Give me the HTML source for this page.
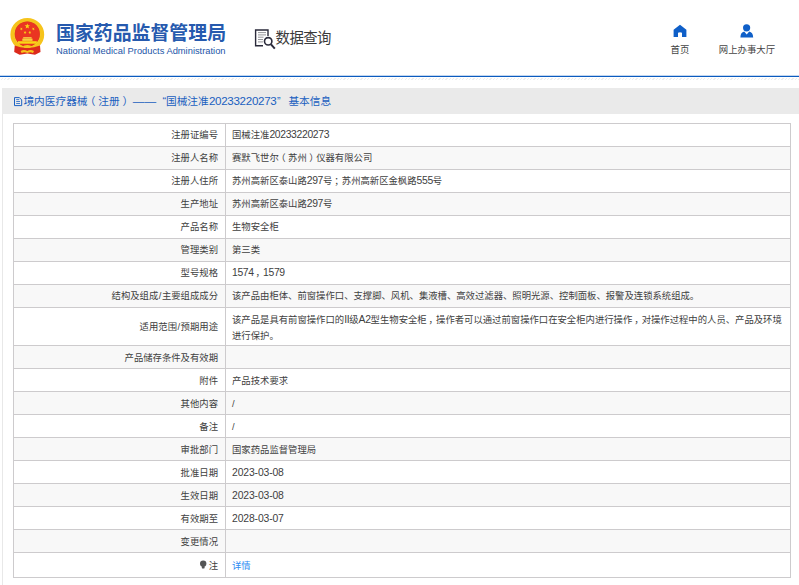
<!DOCTYPE html>
<html lang="zh-CN">
<head>
<meta charset="utf-8">
<title>国家药品监督管理局 数据查询</title>
<style>
html,body{margin:0;padding:0;background:#fff;}
body{width:799px;height:585px;overflow:hidden;position:relative;font-family:"Liberation Sans","Noto Sans CJK SC",sans-serif;color:#333;}
.abs{position:absolute;white-space:nowrap;}
#title{left:56px;top:21px;font-size:18.9px;font-weight:bold;color:#265aae;line-height:26px;letter-spacing:0;}
#subtitle{left:56px;top:45px;font-size:9.33px;color:#2356a8;line-height:12px;}
#qtext{left:275.6px;top:28px;font-size:14.4px;letter-spacing:-0.6px;color:#3a3a3a;line-height:20px;}
#hometext{left:660px;width:40px;text-align:center;top:44px;font-size:9.4px;color:#444;line-height:12px;}
#usertext{left:707px;width:80px;text-align:center;top:44px;font-size:9.4px;color:#444;line-height:12px;}
#blueline{left:0;top:75px;width:799px;height:2px;background:linear-gradient(#c2d6ef 0,#c2d6ef 1px,#0b5bbf 1px,#0b5bbf 2px);}
#hatch{left:0;top:78px;width:799px;height:2px;background:repeating-linear-gradient(135deg,#fff 0,#fff 1.5px,#eeeeee 1.5px,#eeeeee 2.4px);}
#panel{left:2px;top:88px;width:810px;height:500px;border-left:1px solid #e8e8e8;box-sizing:border-box;}
#phead{left:2px;top:88px;width:810px;height:26px;background:#eaeaea;}
#ptext{left:23.4px;top:93px;font-size:10.7px;color:#1a5fc0;line-height:16px;width:320px;height:16px;}
table{position:absolute;left:13px;top:123px;width:778px;border-collapse:collapse;table-layout:fixed;font-size:9.35px;color:#404040;}
td{border:1px solid #cdcbcd;height:23px;padding:0 6px;line-height:14px;box-sizing:border-box;vertical-align:middle;}
table{border:1px solid #c9c7c9;}
td.l{width:212px;text-align:right;padding-right:7px;}
td.v{text-align:left;padding-left:6px;}
tr:nth-child(even) td{background:#f8f8f8;}
tr.tall td{height:38px;line-height:16px;padding-top:2px;}
a{color:#2d8af2;text-decoration:none;}
tr.last td{height:25px;}
tr:nth-child(n+9) td{padding-top:2px;}
tr.tall td.l{padding-top:0;}
.pl{position:relative;left:-0.27em;}
.pr{position:relative;left:0.27em;}
.sl{margin:0 .5px;}
.pc{position:relative;left:0.2em;}
.n{font-size:10.4px;letter-spacing:-0.35px;}
.d{letter-spacing:-0.14px;}
</style>
</head>
<body>
<svg id="icons" class="abs" style="left:0;top:0;z-index:5" width="799" height="585" viewBox="0 0 799 585">
<!-- national emblem -->
<g>
<ellipse cx="27.3" cy="34.5" rx="14.9" ry="14.5" fill="none" stroke="#f6c41c" stroke-width="4"/>
<path d="M14.7 45.4 Q20 47.8 27.3 48 Q34.6 47.8 40 45.4 L40.5 52 L35 54.8 L27.3 53.6 L19.6 54.8 L14.2 52 Z" fill="#dc2a1c"/>
<circle cx="27.3" cy="34" r="13.4" fill="#f6c41c"/>
<circle cx="27.3" cy="34" r="12.6" fill="#d93a1e"/>
<circle cx="27.3" cy="34" r="12.2" fill="#ea3522"/>
<polygon points="27.30,23.40 27.99,25.25 29.96,25.33 28.42,26.56 28.95,28.47 27.30,27.38 25.65,28.47 26.18,26.56 24.64,25.33 26.61,25.25" fill="#f9d616"/>
<polygon points="22.20,27.41 22.01,28.53 22.97,29.13 21.85,29.30 21.57,30.39 21.06,29.38 19.94,29.45 20.74,28.66 20.33,27.61 21.33,28.13" fill="#f9d616"/>
<polygon points="32.50,27.41 33.37,28.13 34.37,27.61 33.96,28.66 34.76,29.45 33.64,29.38 33.13,30.39 32.85,29.30 31.73,29.13 32.69,28.53" fill="#f9d616"/>
<polygon points="25.41,30.95 25.52,32.08 26.60,32.42 25.56,32.87 25.57,33.99 24.83,33.15 23.76,33.51 24.33,32.54 23.66,31.63 24.76,31.87" fill="#f9d616"/>
<polygon points="29.39,30.95 30.04,31.87 31.14,31.63 30.47,32.54 31.04,33.51 29.97,33.15 29.23,33.99 29.24,32.87 28.20,32.42 29.28,32.08" fill="#f9d616"/>
<rect x="23.2" y="37.2" width="8.4" height="1.3" fill="#f9d84a"/>
<rect x="22.3" y="38.6" width="10.2" height="2.3" fill="#f7cf3a"/>
<rect x="18" y="41.2" width="18.8" height="2.5" fill="#f9d616"/>
<ellipse cx="27.3" cy="46.6" rx="3.7" ry="1.5" fill="#f6c41c"/>
<path d="M20.6 51 Q24 49.2 27.3 51 Q30.6 49.2 34 51 L33 53 Q30 51.6 27.3 53 Q24.6 51.6 21.6 53 Z" fill="#f6c41c"/>
</g>
<!-- query icon -->
<g fill="none" stroke="#2b2b3b" stroke-width="1.4">
<path d="M268 36 L268 30 L255.6 30 L255.6 45.8 L263 45.8"/>
<circle cx="268.2" cy="41.3" r="3.7" stroke-width="1.6"/>
<path d="M271 44.3 L274.8 48.6" stroke-width="2"/>
</g>
<g stroke="#8a8a90" stroke-width="0.9">
<path d="M258 32.6 H266"/><path d="M258 34.9 H266"/><path d="M258 37.2 H263.5"/><path d="M258 39.5 H263"/><path d="M258 41.9 H263"/>
</g>
<!-- home icon -->
<path d="M680 24.7 L686.4 29.8 L686.4 37 L682 37 L682 32.8 Q680 31.6 678 32.8 L678 37 L673.6 37 L673.6 29.8 Z" fill="#0f5fc8"/>
<!-- user icon -->
<circle cx="746.6" cy="27.8" r="3.6" fill="#0f5fc8"/>
<path d="M740.4 37.4 Q740.6 32.4 744.2 31.6 L746.7 34.6 L749.2 31.6 Q752.9 32.4 753.2 37.4 Z" fill="#0f5fc8"/>
<!-- panel doc icon -->
<g fill="none" stroke="#1c62c4" stroke-width="1">
<path d="M14.5 97.6 H19.4 L21.7 99.9 V105.6 H14.5 Z"/>
<path d="M16.2 99.6 H19.2" stroke-width="0.8"/><path d="M16.2 101.5 H20" stroke-width="0.8"/><path d="M16.2 103.5 H20" stroke-width="0.8"/>
</g>
<!-- bulb icon -->
<g fill="#555">
<circle cx="203.2" cy="563.6" r="3.2"/>
<rect x="201.8" y="566" width="2.8" height="2.4" rx="0.6"/>
</g>
</svg>
<div id="title" class="abs">国家药品监督管理局</div>
<div id="subtitle" class="abs">National Medical Products Administration</div>
<div id="qtext" class="abs">数据查询</div>
<div id="hometext" class="abs">首页</div>
<div id="usertext" class="abs">网上办事大厅</div>
<div id="blueline" class="abs"></div>
<div id="hatch" class="abs"></div>
<div id="panel" class="abs"></div>
<div id="phead" class="abs"></div>
<div id="ptext" class="abs"><span class="abs" style="left:0">境内医疗器械<span class="pl">（</span>注册<span class="pr">）</span></span><span class="abs" style="left:109.4px;font-size:11.7px">——</span><span class="abs" style="left:139px">“</span><span class="abs" style="left:142.6px">国械注准</span><span class="abs" style="left:185.6px;font-size:11.6px;letter-spacing:-0.32px">20233220273</span><span class="abs" style="left:253.6px">”</span><span class="abs" style="left:265px">基本信息</span></div>
<table>
<tr><td class="l">注册证编号</td><td class="v">国械注准<span class="n">20233220273</span></td></tr>
<tr><td class="l">注册人名称</td><td class="v">赛默飞世尔<span class="pl">（</span>苏州<span class="pr">）</span>仪器有限公司</td></tr>
<tr><td class="l">注册人住所</td><td class="v">苏州高新区泰山路<span class="n">297</span>号<span class="pc">；</span>苏州高新区金枫路<span class="n">555</span>号</td></tr>
<tr><td class="l">生产地址</td><td class="v">苏州高新区泰山路<span class="n">297</span>号</td></tr>
<tr><td class="l">产品名称</td><td class="v">生物安全柜</td></tr>
<tr><td class="l">管理类别</td><td class="v">第三类</td></tr>
<tr><td class="l">型号规格</td><td class="v"><span class="n">1574</span><span class="pc">，</span><span class="n">1579</span></td></tr>
<tr><td class="l">结构及组成<span class="sl">/</span>主要组成成分</td><td class="v">该产品由柜体、前窗操作口、支撑脚、风机、集液槽、高效过滤器、照明光源、控制面板、报警及连锁系统组成。</td></tr>
<tr class="tall"><td class="l">适用范围<span class="sl">/</span>预期用途</td><td class="v">该产品是具有前窗操作口的<span class="n">II</span>级<span class="n">A2</span>型生物安全柜<span class="pc">，</span>操作者可以通过前窗操作口在安全柜内进行操作<span class="pc">，</span>对操作过程中的人员、产品及环境进行保护。</td></tr>
<tr><td class="l">产品储存条件及有效期</td><td class="v"></td></tr>
<tr><td class="l">附件</td><td class="v">产品技术要求</td></tr>
<tr><td class="l">其他内容</td><td class="v">/</td></tr>
<tr><td class="l">备注</td><td class="v">/</td></tr>
<tr><td class="l">审批部门</td><td class="v">国家药品监督管理局</td></tr>
<tr><td class="l">批准日期</td><td class="v"><span class="n d">2023-03-08</span></td></tr>
<tr><td class="l">生效日期</td><td class="v"><span class="n d">2023-03-08</span></td></tr>
<tr><td class="l">有效期至</td><td class="v"><span class="n d">2028-03-07</span></td></tr>
<tr><td class="l">变更情况</td><td class="v"></td></tr>
<tr class="last"><td class="l">注</td><td class="v"><a>详情</a></td></tr>
</table>
</body>
</html>
